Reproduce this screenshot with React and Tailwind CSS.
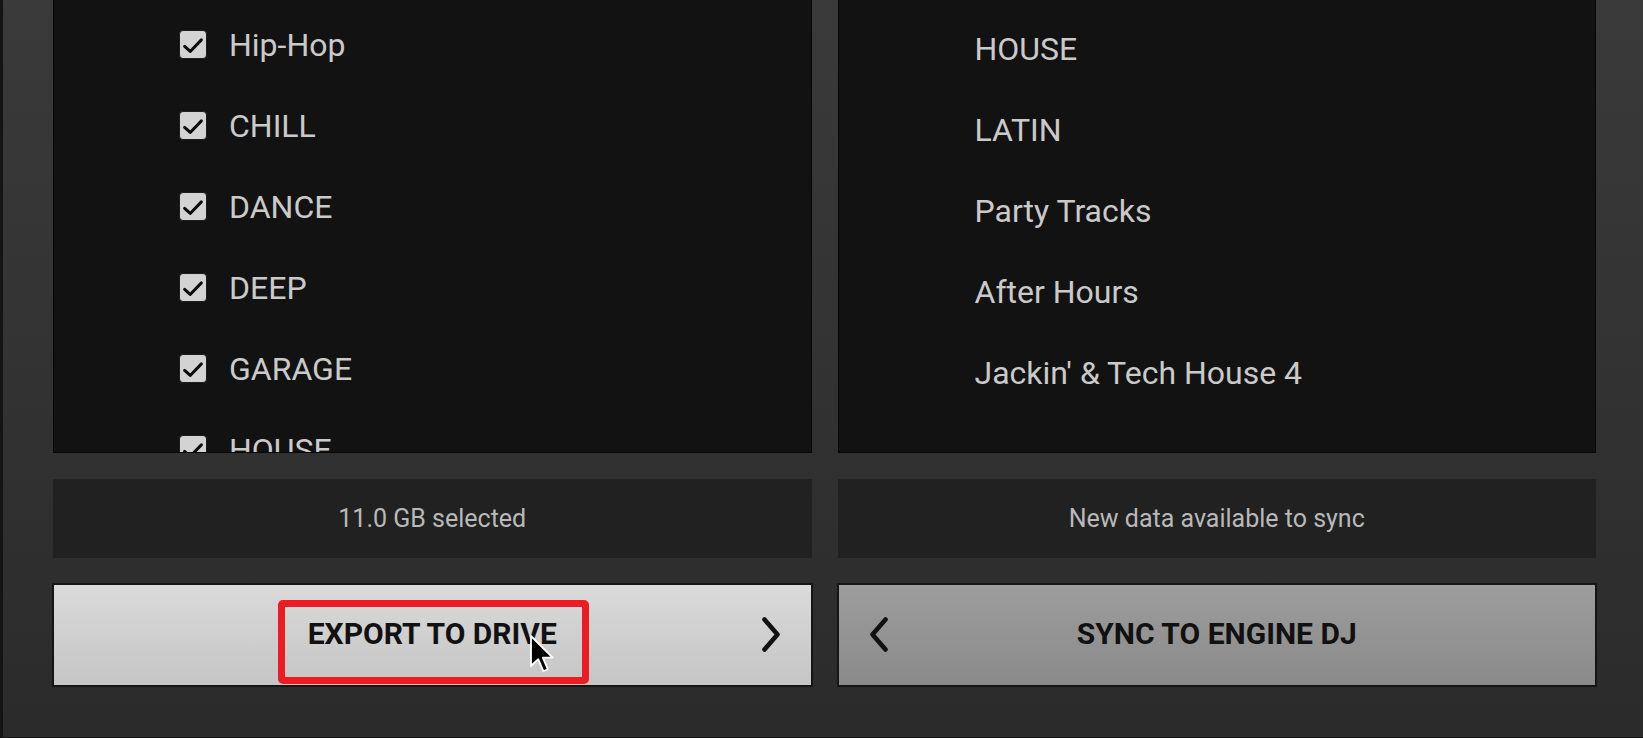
import React from "react";

const leftItems = ["Hip-Hop", "CHILL", "DANCE", "DEEP", "GARAGE", "HOUSE"];
const rightItems = ["HOUSE", "LATIN", "Party Tracks", "After Hours", "Jackin' & Tech House 4"];

function CheckBox() {
  return (
    <div className="w-[28px] h-[29px] shrink-0 rounded-[4px] bg-[#d3d3d3] border border-[#1c1c1c] flex items-center justify-center">
      <svg width="28" height="29" viewBox="0 0 28 29">
        <path d="M5 16.5 L11 22 L23 9.5" fill="none" stroke="#0c0c0c" strokeWidth="3.2" strokeLinecap="round" strokeLinejoin="round" />
      </svg>
    </div>
  );
}

function Chevron({ dir }) {
  return (
    <svg width="20" height="35" viewBox="0 0 20 35">
      {dir === "right" ? (
        <path d="M3.5 2.5 L16.5 17.5 L3.5 32.5" fill="none" stroke="#111" strokeWidth="4.6" strokeLinecap="round" strokeLinejoin="round" />
      ) : (
        <path d="M16.5 2.5 L3.5 17.5 L16.5 32.5" fill="none" stroke="#111" strokeWidth="4.6" strokeLinecap="round" strokeLinejoin="round" />
      )}
    </svg>
  );
}

export default function App() {
  return (
    <div className="w-[1643px] h-[738px] relative overflow-hidden flex bg-linear-to-b from-[#3a3a3a] to-[#2b2b2b] font-['Roboto','Liberation_Sans',sans-serif]">
      <div className="w-[3px] h-full bg-[#141414]" />
      <div className="flex-1 pl-[50px] pr-[47px]">
        <div className="grid grid-cols-2 gap-x-[26px] gap-y-[26px] grid-rows-[453px_79px_103px]">
          {/* Left panel */}
          <div className="bg-[#121212] border-l border-r border-b border-[#060606] overflow-hidden pt-[4px] pl-[125px]">
            {leftItems.map((t) => (
              <div key={t} className="h-[81px] flex items-center gap-[22px]">
                <CheckBox />
                <span className="text-[32px] leading-none text-[#cacaca]">{t}</span>
              </div>
            ))}
          </div>
          {/* Right panel */}
          <div className="bg-[#121212] border-l border-r border-b border-[#060606] overflow-hidden pt-[8px] pl-[136px]">
            {rightItems.map((t) => (
              <div key={t} className="h-[81px] flex items-center">
                <span className="text-[32px] leading-none text-[#cacaca]">{t}</span>
              </div>
            ))}
          </div>
          {/* Status boxes */}
          <div className="bg-[#212121] flex items-center justify-center">
            <span className="text-[25px] text-[#b9b9b9]">11.0 GB selected</span>
          </div>
          <div className="bg-[#212121] flex items-center justify-center">
            <span className="text-[25px] text-[#b9b9b9]">New data available to sync</span>
          </div>
          {/* Buttons */}
          <div className="-mx-px -mt-px border-2 border-[#151515] bg-linear-to-b from-[#dadada] to-[#c5c5c5] grid grid-cols-[1fr_auto_1fr] items-center pb-[3px]">
            <div />
            <span className="text-[30px] font-bold text-[#111]">EXPORT TO DRIVE</span>
            <div className="flex justify-end pr-[30px] pt-[2px]">
              <Chevron dir="right" />
            </div>
          </div>
          <div className="-mx-px -mt-px border-2 border-[#151515] bg-linear-to-b from-[#9d9d9d] to-[#8a8a8a] grid grid-cols-[1fr_auto_1fr] items-center pb-[3px]">
            <div className="flex justify-start pl-[30px] pt-[2px]">
              <Chevron dir="left" />
            </div>
            <span className="text-[30px] font-bold text-[#111]">SYNC TO ENGINE DJ</span>
            <div />
          </div>
        </div>
      </div>

      {/* Red highlight annotation */}
      <div className="absolute left-[278px] top-[600px] w-[311px] h-[84px] border-[7px] border-[#ec1c24] rounded-[5px]" />

      {/* Mouse cursor */}
      <svg className="absolute left-[529px] top-[634px]" width="26" height="40" viewBox="0 0 13 20">
        <path d="M1 1 L1 16 L4.6 12.6 L7.2 18.6 L9.4 17.6 L6.9 11.8 L11.8 11.8 Z" fill="#000" stroke="#fff" strokeWidth="0.9" strokeLinejoin="round" />
      </svg>

      <div className="absolute left-0 right-0 bottom-0 h-px bg-[#151515]" />
    </div>
  );
}
